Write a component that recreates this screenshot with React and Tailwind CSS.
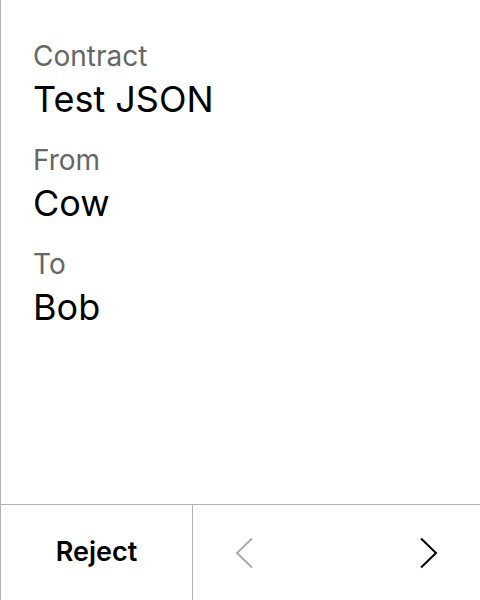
const fields = [
  { label: 'Contract', value: 'Test JSON' },
  { label: 'From', value: 'Cow' },
  { label: 'To', value: 'Bob' },
]

function Chevron({ dir, className }) {
  const points = dir === 'left' ? '17,1.5 2,16 17,30.5' : '1,1.5 16,16 1,30.5'
  return (
    <svg width="18" height="32" viewBox="0 0 18 32" className={className}>
      <polyline points={points} fill="none" stroke="currentColor" strokeWidth="2" />
    </svg>
  )
}

export default function App() {
  return (
    <div
      className="w-[480px] h-[600px] flex flex-col bg-white border-l border-[#b3b3b3] text-black"
      style={{ fontFamily: 'Inter, "Noto Sans", sans-serif' }}
    >
      <div className="flex-1 flex flex-col gap-[29px] pl-[32px] pt-[42px]">
        {fields.map(f => (
          <div key={f.label}>
            <p className="text-[28px] leading-[28px] text-[#666666]">{f.label}</p>
            <p className="text-[36px] leading-[36px] mt-[11px]">{f.value}</p>
          </div>
        ))}
      </div>

      <div className="h-[96px] flex border-t border-[#b3b3b3]">
        <button className="w-[192px] flex items-center justify-center border-r border-[#b3b3b3] text-[27px] font-semibold">
          Reject
        </button>
        <div className="flex-1 flex items-center justify-between px-[42px]">
          <Chevron dir="left" className="text-[#ababab]" />
          <Chevron dir="right" className="text-black" />
        </div>
      </div>
    </div>
  )
}
